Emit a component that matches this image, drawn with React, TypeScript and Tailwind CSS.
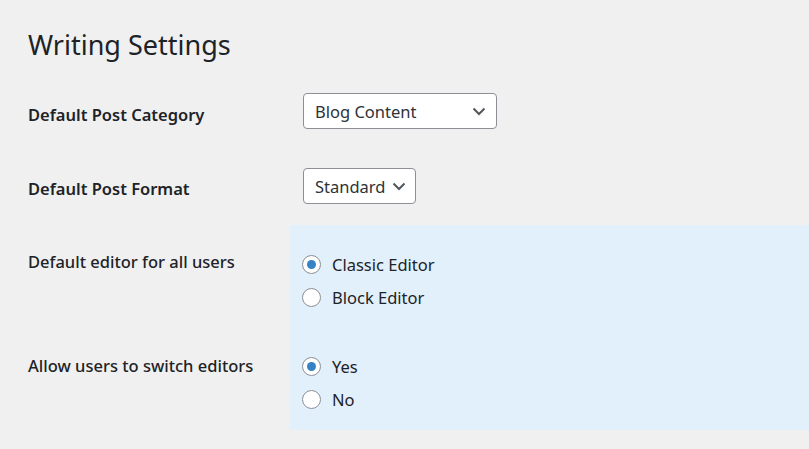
import { useState } from 'react';

const font = { fontFamily: '"Noto Sans", "Open Sans", sans-serif' };

const Chevron = () => (
  <svg width="14" height="9" viewBox="0 0 14 9" className="shrink-0">
    <path d="M1.5 1.5 L7 7 L12.5 1.5" fill="none" stroke="#50575e" strokeWidth="2" />
  </svg>
);

interface SelectProps {
  value: string;
  className?: string;
}

const FakeSelect = ({ value, className = '' }: SelectProps) => (
  <div
    className={`flex items-center h-[36px] rounded-[4px] border border-[#8c8f94] bg-white pl-[11px] text-[16.5px] text-[#2c3338] ${className}`}
  >
    <span className="flex-1 leading-none pt-[2px]">{value}</span>
    <Chevron />
  </div>
);

interface RadioProps {
  label: string;
  checked: boolean;
  onSelect: () => void;
}

const Radio = ({ label, checked, onSelect }: RadioProps) => (
  <button type="button" onClick={onSelect} className="flex items-center h-[33px] text-left">
    <span className="flex items-center justify-center w-[19px] h-[19px] rounded-full border border-[#8c8f94] bg-white shrink-0">
      {checked && <span className="w-[9px] h-[9px] rounded-full bg-[#3582c4]" />}
    </span>
    <span className="ml-[11px] pt-[1px] text-[16.5px] text-[#1d2327]">{label}</span>
  </button>
);

export default function App() {
  const [editor, setEditor] = useState('classic');
  const [allowSwitch, setAllowSwitch] = useState('yes');

  return (
    <div style={font} className="w-[809px] h-[449px] overflow-hidden bg-[#f0f0f1] text-[#1d2327]">
      <h1 className="pl-[28px] pt-[27px] text-[27px] leading-[36px] font-normal">Writing Settings</h1>

      <div className="flex items-start mt-[30px] pl-[28px]">
        <div className="w-[275px] pt-[10px] text-[16.5px] leading-[24px] font-semibold">Default Post Category</div>
        <FakeSelect value="Blog Content" className="w-[194px] pr-[10px]" />
      </div>

      <div className="flex items-start mt-[39px] pl-[28px]">
        <div className="w-[275px] pt-[9px] text-[16.5px] leading-[24px] font-semibold">Default Post Format</div>
        <FakeSelect value="Standard" className="w-[113px] pr-[9px] gap-[6px]" />
      </div>

      <div className="grid grid-cols-[262px_1fr] mt-[21px] pl-[28px]">
        <div className="pt-[25px] text-[16.5px] leading-[24px] font-medium">Default editor for all users</div>
        <div className="flex flex-col items-start bg-[#e2f0fb] pl-[12px] pt-[23px] pb-[16px]">
          <Radio label="Classic Editor" checked={editor === 'classic'} onSelect={() => setEditor('classic')} />
          <Radio label="Block Editor" checked={editor === 'block'} onSelect={() => setEditor('block')} />
        </div>

        <div className="pt-[24px] text-[16.5px] leading-[24px] font-medium">Allow users to switch editors</div>
        <div className="flex flex-col items-start bg-[#e2f0fb] pl-[12px] pt-[20px] pb-[14px]">
          <Radio label="Yes" checked={allowSwitch === 'yes'} onSelect={() => setAllowSwitch('yes')} />
          <Radio label="No" checked={allowSwitch === 'no'} onSelect={() => setAllowSwitch('no')} />
        </div>
      </div>
    </div>
  );
}
